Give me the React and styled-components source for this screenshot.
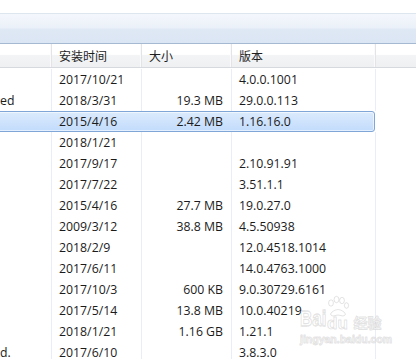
import React from "react";
import styled, { createGlobalStyle, css } from "styled-components";

const Global = createGlobalStyle`
  html, body { margin: 0; padding: 0; background: #fff; }
  body { font-family: "Open Sans", "Noto Sans CJK SC", sans-serif; font-size: 12.3px; color: #1b1b1b; }
`;

const Page = styled.div`
  position: relative;
  width: 416px;
  height: 359px;
  overflow: hidden;
  background: #fff;
`;

const TopGap = styled.div`
  height: 13px;
  background: #fff;
  border-bottom: 1px solid #dde5ef;
`;

const NavBand = styled.div`
  height: 29px;
  background: linear-gradient(to bottom, #f4f7fc 0%, #ebf1f9 48%, #dfe8f5 52%, #dbe6f4 100%);
  border-bottom: 1px solid #a6b9d2;
`;

const COLS = "52px 90px 90px 144px 1fr";

const Header = styled.div`
  display: grid;
  grid-template-columns: ${COLS};
  height: 23px;
  background: linear-gradient(to bottom, #ffffff 0%, #ffffff 45%, #f3f4f6 50%, #eff0f2 100%);
  border-bottom: 1px solid #d6d9de;
`;

const HeadCell = styled.div`
  display: flex;
  align-items: center;
  padding-left: 7px;
  font-family: "Noto Sans CJK SC", sans-serif;
  font-size: 12px;
  color: #1e1e1e;
  border-right: 1px solid #e2e4e8;
  box-shadow: inset -1px 0 0 #fafafa;
  &:last-child { border-right: none; box-shadow: none; }
`;

const Body = styled.div`
  padding-top: 1px;
`;

const Row = styled.div`
  position: relative;
  display: grid;
  grid-template-columns: ${COLS};
  height: 21px;
  ${(p) =>
    p.$selected &&
    css`
      &::before {
        content: "";
        position: absolute;
        left: -4px;
        width: 379px;
        top: 0;
        bottom: 0;
        border: 1px solid #7fa6d6;
        border-radius: 3px;
        background: linear-gradient(to bottom, #dcebfd 0%, #cfe3fc 50%, #c2dcfc 100%);
        box-shadow: inset 0 0 0 1px rgba(255, 255, 255, 0.55);
        box-sizing: border-box;
      }
    `}
`;

const Cell = styled.div`
  position: relative;
  display: flex;
  align-items: center;
  justify-content: ${(p) => (p.$right ? "flex-end" : "flex-start")};
  padding: ${(p) => (p.$right ? "0 8px 0 0" : "0 0 0 7px")};
  ${(p) => p.$flush && "padding-left: 0;"}
  white-space: nowrap;
  overflow: hidden;
  border-right: 1px solid ${(p) => (p.$sel ? "transparent" : "#e7eef9")};
  &:last-child { border-right: none; }
  color: #1b1b1b;
`;

const Watermark = styled.div`
  position: absolute;
  left: 300px;
  top: 293px;
  width: 92px;
  height: 52px;
  pointer-events: none;
  color: #fff;
  -webkit-text-stroke: 1px rgba(130, 130, 130, 0.22);
`;

const WmLogo = styled.div`
  display: flex;
  align-items: flex-end;
  height: 38px;
  font-family: "Liberation Sans", sans-serif;
  font-weight: bold;
  line-height: 1;
`;

const WmBai = styled.span`
  display: inline-block;
  font-size: 17px;
  transform: scaleY(1.3);
  transform-origin: bottom left;
  margin-bottom: 1px;
`;

const WmCn = styled.span`
  font-family: "Noto Sans CJK SC", sans-serif;
  font-size: 14px;
  font-weight: bold;
  margin-left: 3px;
  margin-bottom: 2px;
`;

const WmUrl = styled.div`
  font-family: "Liberation Sans", sans-serif;
  font-size: 10.5px;
  font-weight: bold;
  margin-top: 2px;
`;

const rows = [
  ["", "2017/10/21", "", "4.0.0.1001"],
  ["ed", "2018/3/31", "19.3 MB", "29.0.0.113"],
  ["", "2015/4/16", "2.42 MB", "1.16.16.0", true],
  ["", "2018/1/21", "", ""],
  ["", "2017/9/17", "", "2.10.91.91"],
  ["", "2017/7/22", "", "3.51.1.1"],
  ["", "2015/4/16", "27.7 MB", "19.0.27.0"],
  ["", "2009/3/12", "38.8 MB", "4.5.50938"],
  ["", "2018/2/9", "", "12.0.4518.1014"],
  ["", "2017/6/11", "", "14.0.4763.1000"],
  ["", "2017/10/3", "600 KB", "9.0.30729.6161"],
  ["", "2017/5/14", "13.8 MB", "10.0.40219"],
  ["", "2018/1/21", "1.16 GB", "1.21.1"],
  ["d.", "2017/6/10", "", "3.8.3.0"],
];

export default function App() {
  return (
    <Page>
      <Global />
      <TopGap />
      <NavBand />
      <Header>
        <HeadCell />
        <HeadCell>安装时间</HeadCell>
        <HeadCell>大小</HeadCell>
        <HeadCell>版本</HeadCell>
        <HeadCell />
      </Header>
      <Body>
        {rows.map(([name, date, size, ver, sel], i) => (
          <Row key={i} $selected={sel}>
            <Cell $flush $sel={sel}>{name}</Cell>
            <Cell $sel={sel}>{date}</Cell>
            <Cell $right $sel={sel}>{size}</Cell>
            <Cell $sel={sel}>{ver}</Cell>
            <Cell />
          </Row>
        ))}
      </Body>
      <Watermark>
        <WmLogo>
          <WmBai>Bai</WmBai>
          <svg width="24" height="36" viewBox="0 0 24 36">
            <g fill="#fff" stroke="rgba(130,130,130,0.22)" strokeWidth="1">
              <ellipse cx="5" cy="8" rx="2.4" ry="3.2" />
              <ellipse cx="10.5" cy="4.5" rx="2.4" ry="3.2" />
              <ellipse cx="16" cy="5.5" rx="2.4" ry="3.2" />
              <ellipse cx="20.5" cy="10.5" rx="2.1" ry="2.8" />
              <path d="M6 17 Q12 12 18 17 Q21 20 17 21 Q12 19 7 21 Q3 20 6 17 Z" />
              <text x="1" y="34" fontFamily="Liberation Sans, sans-serif" fontWeight="bold" fontSize="17">du</text>
            </g>
          </svg>
          <WmCn>经验</WmCn>
        </WmLogo>
        <WmUrl>jingyan.baidu.com</WmUrl>
      </Watermark>
    </Page>
  );
}
